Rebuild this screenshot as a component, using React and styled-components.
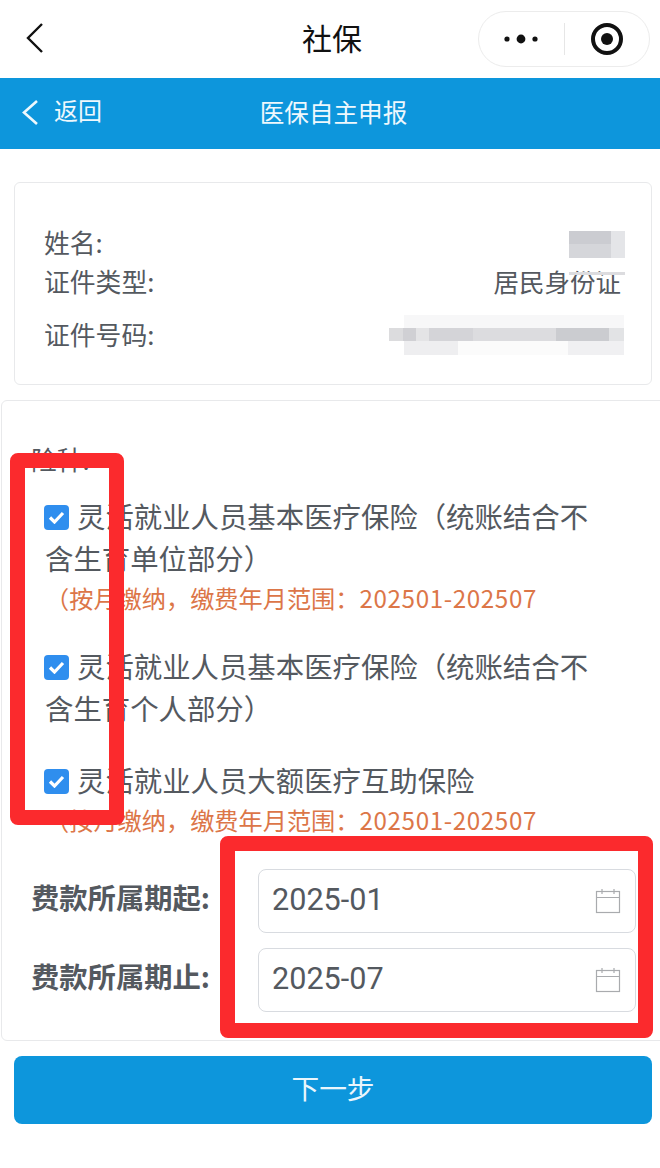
import React from "react";
import styled, { createGlobalStyle } from "styled-components";

const Global = createGlobalStyle`
  html, body { margin: 0; padding: 0; background: #fff; }
  body { font-family: "Noto Sans CJK SC", "Noto Sans", sans-serif; color: #54595f; }
  * { box-sizing: border-box; }
`;

const Page = styled.div`
  position: relative;
  width: 660px;
  height: 1168px;
  overflow: hidden;
  background: #fff;
`;

const TopBar = styled.header`
  height: 78px;
  display: grid;
  grid-template-columns: 1fr auto 1fr;
  align-items: center;
  padding: 0 10px 0 14px;
`;
const NavBack = styled.div`
  display: flex;
  margin-left: 12px;
  margin-top: -2px;
`;
const Title = styled.div`
  font-size: 30px;
  line-height: 40px;
  color: #111;
  margin-top: -4px;
`;
const Capsule = styled.div`
  justify-self: end;
  width: 172px;
  height: 56px;
  margin-top: -1px;
  border: 1px solid #ececec;
  border-radius: 28px;
  display: grid;
  grid-template-columns: 1fr 1px 1fr;
  align-items: center;
  justify-items: center;
`;
const CapsuleRule = styled.span`
  width: 1px;
  height: 32px;
  background: #e6e6e6;
`;
const BlueBar = styled.div`
  height: 71px;
  background: #0d96dc;
  color: #eef8fd;
  display: grid;
  grid-template-columns: 1fr auto 1fr;
  align-items: center;
  padding: 0 15px 2px 22px;
`;
const BackLink = styled.div`
  display: flex;
  align-items: center;
  gap: 16px;
  font-size: 24px;
  line-height: 32px;
`;
const BackText = styled.span`
  margin-top: -6px;
`;
const BlueTitle = styled.div`
  font-size: 24.6px;
  line-height: 34px;
  margin-top: -4px;
`;
const InfoCard = styled.section`
  margin: 33px 8px 0 14px;
  height: 203px;
  border: 1px solid #e8e9eb;
  border-radius: 6px;
  padding: 39px 30px 0 29px;
  font-size: 25.8px;
`;
const InfoRow = styled.div`
  display: flex;
  justify-content: space-between;
  align-items: center;
  height: ${(p) => p.$h}px;
  line-height: 34px;
`;
const InfoValue = styled.span`
  font-size: 25.5px;
`;
const FormPanel = styled.section`
  margin: 15px -8px 0 1px;
  height: 641px;
  border: 1px solid #e8e9eb;
  border-radius: 6px;
  padding: 41px 0 0 29px;
`;
const FieldTitle = styled.div`
  font-size: 25.8px;
  line-height: 34px;
  margin-bottom: 19px;
`;
const Option = styled.div`
  margin: 0 0 ${(p) => p.$after}px 14px;
  width: 552px;
  font-size: 28.4px;
  line-height: 42px;
`;
const Box = styled.span`
  display: inline-flex;
  align-items: center;
  justify-content: center;
  width: 25px;
  height: 25px;
  margin: 0 8px 0 -1px;
  border-radius: 4px;
  background: #2f8eee;
  vertical-align: 4px;
`;
const Note = styled.div`
  margin: 0 0 ${(p) => p.$after}px 14px;
  font-size: 24.2px;
  line-height: 38px;
  color: #dc7648;
`;
const NoteDigits = styled.span`
  letter-spacing: 0.62px;
`;
const DateRow = styled.div`
  display: flex;
  align-items: center;
  height: 64px;
  margin-bottom: 15px;
`;
const DateLabel = styled.div`
  width: 227px;
  font-size: 28.3px;
  font-weight: 700;
  color: #54595f;
  margin-top: -10px;
`;
const DateInput = styled.div`
  width: 378px;
  height: 64px;
  border: 1px solid #d8dbe0;
  border-radius: 8px;
  padding: 0 14px 0 13px;
  display: flex;
  align-items: center;
  justify-content: space-between;
  font-family: "Roboto", sans-serif;
  font-size: 30.6px;
  color: #54595f;
`;
const DateValue = styled.span`
  margin-top: -4px;
`;
const NextButton = styled.button`
  display: block;
  margin: 15px 0 0 14px;
  width: 638px;
  height: 68px;
  border: 0;
  border-radius: 8px;
  padding: 0 0 6px;
  background: #0d96dc;
  color: #eaf6fc;
  font-family: inherit;
  font-size: 27.7px;
`;
const RedFrame = styled.div`
  position: absolute;
  left: ${(p) => p.$x}px;
  top: ${(p) => p.$y}px;
  width: ${(p) => p.$w}px;
  height: ${(p) => p.$h}px;
  border: 15px solid #fb2a2d;
  border-radius: 8px;
`;
const Mosaic = styled.svg`
  position: absolute;
  left: ${(p) => p.$x}px;
  top: ${(p) => p.$y}px;
`;

const Chevron = ({ w, h, color, sw }) => (
  <svg width={w} height={h} viewBox={`0 0 ${w} ${h}`} fill="none" stroke={color} strokeWidth={sw}>
    <path d={`M${w - 1} 1 L2 ${h / 2} L${w - 1} ${h - 1}`} />
  </svg>
);

const Calendar = () => (
  <svg width="26" height="26" viewBox="0 0 26 26" fill="none" stroke="#a9abae" strokeWidth="1.2">
    <rect x="1.5" y="3.5" width="23" height="21" />
    <path d="M1.5 9.5H24.5M7 1V6M19 1V6" />
  </svg>
);

const Check = () => (
  <svg width="17" height="13" viewBox="0 0 17 13" fill="none" stroke="#fff" strokeWidth="3.2">
    <path d="M2 6.5L6.5 11L15 2" />
  </svg>
);

const App = () => (
  <Page>
    <Global />
    <TopBar>
      <NavBack><Chevron w={17} h={30} color="#111" sw={2.4} /></NavBack>
      <Title>社保</Title>
      <Capsule>
        <svg width="36" height="10" viewBox="0 0 36 10" fill="#111">
          <circle cx="4" cy="5" r="2.6" />
          <circle cx="18" cy="5" r="4.4" />
          <circle cx="32" cy="5" r="2.6" />
        </svg>
        <CapsuleRule />
        <svg width="34" height="34" viewBox="0 0 34 34">
          <circle cx="17" cy="17" r="14" fill="none" stroke="#111" strokeWidth="4" />
          <circle cx="17" cy="17" r="6" fill="#111" />
        </svg>
      </Capsule>
    </TopBar>
    <BlueBar>
      <BackLink>
        <Chevron w={16} h={25} color="#eef8fd" sw={2.6} />
        <BackText>返回</BackText>
      </BackLink>
      <BlueTitle>医保自主申报</BlueTitle>
    </BlueBar>
    <InfoCard>
      <InfoRow $h={39}>
        <span>姓名:</span>
      </InfoRow>
      <InfoRow $h={39}>
        <span>证件类型:</span>
        <InfoValue>居民身份证</InfoValue>
      </InfoRow>
      <InfoRow $h={67}>
        <span>证件号码:</span>
      </InfoRow>
    </InfoCard>
    <Mosaic $x={569} $y={231} width="56" height="44" viewBox="0 0 56 44">
      <rect width="42" height="13" fill="#cbccd1" />
      <rect y="13" width="42" height="14" fill="#d5d6da" />
      <rect x="42" width="14" height="27" fill="#e4e5e8" />
      <rect y="41" width="56" height="3" fill="#dcdcdf" />
    </Mosaic>
    <Mosaic $x={388} $y={315} width="237" height="40" viewBox="0 0 237 40">
      <rect x="16" width="220" height="13" fill="#f7f7f8" />
      <rect x="16" y="26" width="54" height="14" fill="#eeeef0" />
      <rect x="70" y="26" width="110" height="14" fill="#fbfbfb" />
      <rect x="180" y="26" width="56" height="14" fill="#f0f0f2" />
      <rect x="1" y="13" width="14" height="13" fill="#dcdcde" />
      <rect x="15" y="13" width="13" height="13" fill="#d0d0d4" />
      <rect x="28" y="13" width="13" height="13" fill="#e4e4e6" />
      <rect x="41" y="13" width="44" height="13" fill="#d4d4d8" />
      <rect x="85" y="13" width="83" height="13" fill="#dcdcdf" />
      <rect x="168" y="13" width="53" height="13" fill="#cbccd0" />
      <rect x="221" y="13" width="15" height="13" fill="#e2e3e5" />
    </Mosaic>
    <FormPanel>
      <FieldTitle>险种:</FieldTitle>
      <Option $after={0}>
        <Box><Check /></Box>灵活就业人员基本医疗保险（统账结合不含生育单位部分）
      </Option>
      <Note $after={28}>（按月缴纳，缴费年月范围：<NoteDigits>202501-202507</NoteDigits></Note>
      <Option $after={30}>
        <Box><Check /></Box>灵活就业人员基本医疗保险（统账结合不含生育个人部分）
      </Option>
      <Option $after={0}>
        <Box><Check /></Box>灵活就业人员大额医疗互助保险
      </Option>
      <Note $after={30}>（按月缴纳，缴费年月范围：<NoteDigits>202501-202507</NoteDigits></Note>
      <DateRow>
        <DateLabel>费款所属期起:</DateLabel>
        <DateInput><DateValue>2025-01</DateValue><Calendar /></DateInput>
      </DateRow>
      <DateRow>
        <DateLabel>费款所属期止:</DateLabel>
        <DateInput><DateValue>2025-07</DateValue><Calendar /></DateInput>
      </DateRow>
    </FormPanel>
    <NextButton>下一步</NextButton>
    <RedFrame $x={10} $y={453} $w={114} $h={372} />
    <RedFrame $x={220} $y={836} $w={433} $h={202} />
  </Page>
);

export default App;
